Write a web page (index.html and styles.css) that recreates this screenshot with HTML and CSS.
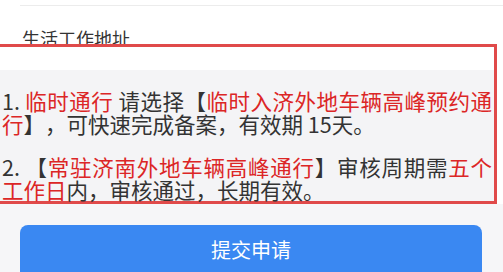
FILE: index.html
```html
<!DOCTYPE html>
<html lang="zh-CN">
<head>
  <meta charset="UTF-8">
  <title>提交申请</title>
  <link rel="stylesheet" href="styles.css">
</head>
<body>

  <div class="topline"></div>
  <div class="field-label">生活工作地址</div>

  <div class="notice-box">
    <div class="blank"></div>
    <div class="notice">
      <p>1. <span class="red">临时通行</span> 请选择【<span class="red">临时入济外地车辆高峰预约通行</span>】，可快速完成备案，有效期 15天。</p>
      <p>2. 【<span class="red">常驻济南外地车辆高峰通行</span>】审核周期需<span class="red">五个工作日</span>内，审核通过，长期有效。</p>
    </div>
  </div>

  <div class="actions">
    <button class="submit">提交申请</button>
  </div>

</body>
</html>
```

FILE: styles.css
```css
body {
  margin: 0;
  background-color: white;
  color: #333;
  font-family: "Noto Sans CJK SC", "Noto Sans", sans-serif;
  overflow: hidden;
}
.topline {
  height: 5px;
  margin-left: 20px;
  border-bottom: 1px solid #ececec;
}
.field-label {
  padding-left: 22px;
  margin-top: 20px;
  font-size: 18px;
  line-height: 24px;
  color: #333;
}
.notice-box {
  position: relative;
  margin-top: -6px;
  margin-left: -10px;
  width: 501px;
  border: 3px solid #e04a4a;
  background-color: white;
}
.blank {
  height: 23px;
}
.notice {
  background-color: #f4f4f6;
  padding: 19px 2px 0 9px;
}
.notice p {
  margin: 0 0 20px 0;
  font-size: 21.5px;
  line-height: 23px;
  text-align: justify;
  text-spacing-trim: space-all;
}
.notice p:last-child {
  margin-bottom: 0;
}
.red {
  color: #dc2626;
}
.actions {
  background-color: #f6f6f8;
  padding: 21px 21px 20px 20px;
}
.submit {
  display: block;
  width: 100%;
  height: 60px;
  padding: 0 0 12px 0;
  border: none;
  border-radius: 8px;
  background-color: #3a88f2;
  color: white;
  font-family: "Noto Sans CJK SC", sans-serif;
  font-size: 20px;
}
```
